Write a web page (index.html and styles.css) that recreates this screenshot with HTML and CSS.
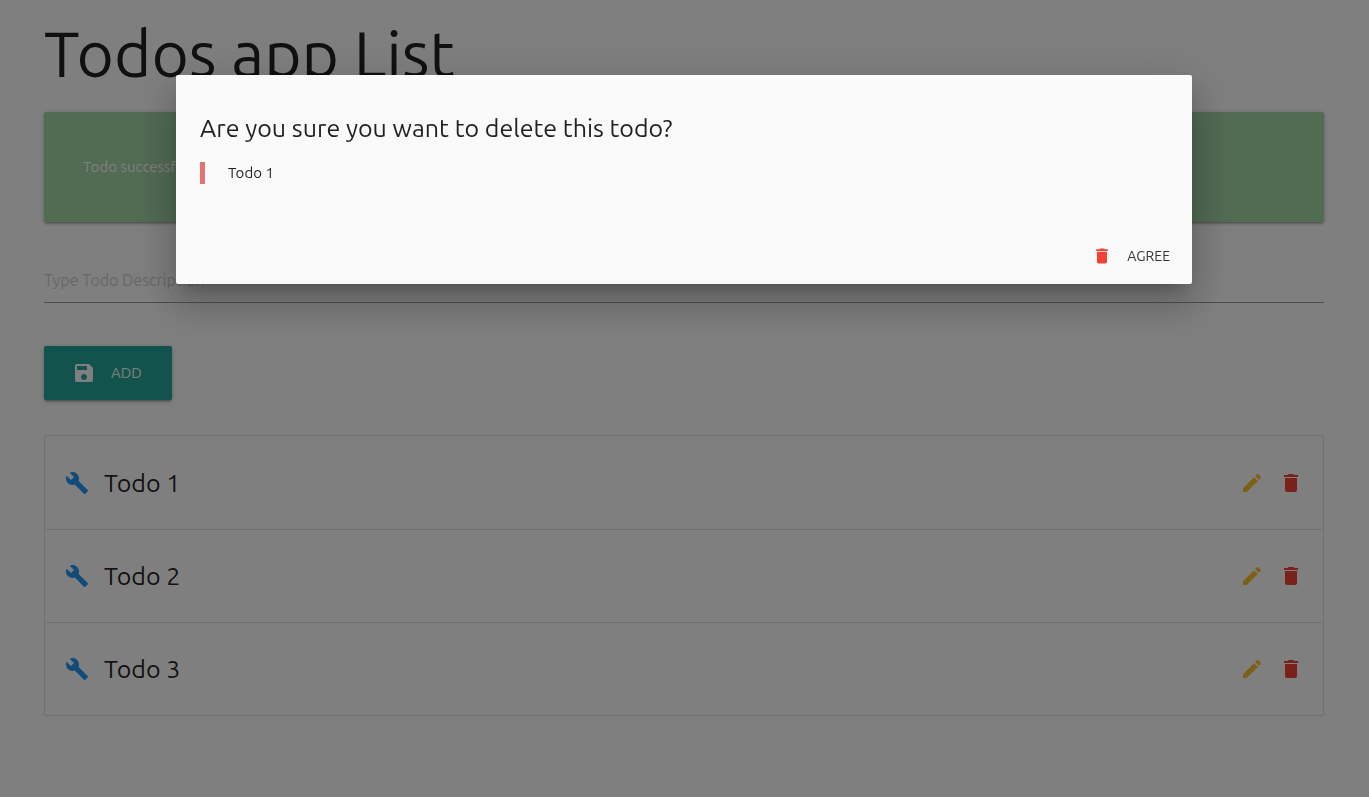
FILE: index.html
```html
<!DOCTYPE html>
<html lang="en">
<head>
<meta charset="utf-8">
<meta name="viewport" content="width=device-width, initial-scale=1">
<title>Todos app List</title>
<link rel="stylesheet" href="styles.css">
</head>
<body>
<svg class="sprite" aria-hidden="true">
  <symbol id="save" viewBox="0 0 24 24"><path d="M17 3H5c-1.110 0-2 .9-2 2v14c0 1.100.89 2 2 2h14c1.100 0 2-.9 2-2V7l-4-4zm-5 16c-1.660 0-3-1.340-3-3s1.340-3 3-3 3 1.340 3 3-1.340 3-3 3zm3-10H5V5h10v4z"/></symbol>
  <symbol id="build" viewBox="0 0 24 24"><path d="M22.700 19l-9.100-9.100c.9-2.300.4-5-1.500-6.900-2-2-5-2.400-7.400-1.300L9 6 6 9 1.600 4.700C.4 7.100.9 10.100 2.900 12.100c1.900 1.900 4.600 2.400 6.900 1.500l9.100 9.100c.4.4 1 .4 1.400 0l2.300-2.300c.5-.4.5-1.100.1-1.400z"/></symbol>
  <symbol id="edit" viewBox="0 0 24 24"><path d="M3 17.250V21h3.750L17.810 9.940l-3.750-3.750L3 17.250zM20.710 7.040c.39-.39.39-1.020 0-1.410l-2.340-2.340c-.39-.39-1.020-.39-1.410 0l-1.830 1.830 3.750 3.750 1.830-1.830z"/></symbol>
  <symbol id="delete" viewBox="0 0 24 24"><path d="M6 19c0 1.100.9 2 2 2h8c1.100 0 2-.9 2-2V7H6v12zM19 4h-3.500l-1-1h-5l-1 1H5v2h14V4z"/></symbol>
</svg>
<main class="container">
  <h1 class="page-title">Todos app List</h1>
  <div class="card-panel">Todo successfully added!</div>
  <form class="todo-form">
    <input class="todo-input" type="text" aria-label="Todo description" placeholder="Type Todo Description">
    <button class="btn-add" type="button"><svg class="icon"><use href="#save"/></svg>ADD</button>
  </form>
  <ul class="collection">
    <li class="item"><svg class="icon blue"><use href="#build"/></svg><span class="item-title">Todo 1</span>
      <button class="icon-btn amber" type="button" aria-label="Edit Todo 1"><svg class="icon"><use href="#edit"/></svg></button>
      <button class="icon-btn red" type="button" aria-label="Delete Todo 1"><svg class="icon"><use href="#delete"/></svg></button></li>
    <li class="item"><svg class="icon blue"><use href="#build"/></svg><span class="item-title">Todo 2</span>
      <button class="icon-btn amber" type="button" aria-label="Edit Todo 2"><svg class="icon"><use href="#edit"/></svg></button>
      <button class="icon-btn red" type="button" aria-label="Delete Todo 2"><svg class="icon"><use href="#delete"/></svg></button></li>
    <li class="item"><svg class="icon blue"><use href="#build"/></svg><span class="item-title">Todo 3</span>
      <button class="icon-btn amber" type="button" aria-label="Edit Todo 3"><svg class="icon"><use href="#edit"/></svg></button>
      <button class="icon-btn red" type="button" aria-label="Delete Todo 3"><svg class="icon"><use href="#delete"/></svg></button></li>
  </ul>
</main>
<div class="overlay">
  <section class="modal" role="dialog" aria-modal="true" aria-labelledby="modal-title">
    <div class="modal-content">
      <h2 class="modal-title" id="modal-title">Are you sure you want to delete this todo?</h2>
      <blockquote class="quote">Todo 1</blockquote>
    </div>
    <footer class="modal-footer">
      <button class="btn-agree" type="button"><svg class="icon-small red"><use href="#delete"/></svg>AGREE</button>
    </footer>
  </section>
</div>
</body>
</html>
```
FILE: styles.css
```css
* { box-sizing: border-box; }
body {
  margin: 0;
  padding-right: 1px;
  background: #fff;
  color: rgba(0, 0, 0, .87);
  font: 15px/22px Ubuntu, "Noto Sans", sans-serif;
}
button, input { font: inherit; }
button { border: 0; background: none; padding: 0; cursor: pointer; }
.sprite { position: absolute; width: 0; height: 0; }
.icon { width: 24px; height: 24px; fill: currentColor; flex: none; }
.icon-small { width: 20px; height: 20px; fill: currentColor; flex: none; }
.blue { color: #2196f3; }
.amber { color: #fbc02d; }
.red { color: #f44336; }

.container { width: 94%; max-width: 1280px; margin: 0 auto; }
.page-title {
  margin: 0;
  padding: 18px 0 24px;
  font-size: 64px;
  line-height: 70px;
  font-weight: 400;
  color: #212121;
}
.card-panel {
  padding: 44px 39px;
  border-radius: 2px;
  background: #a5d6a7;
  color: #fff;
  box-shadow: 0 2px 2px rgba(0, 0, 0, .14), 0 3px 1px -2px rgba(0, 0, 0, .12), 0 1px 5px rgba(0, 0, 0, .2);
}
.todo-form { padding-top: 36px; }
.todo-input {
  display: block;
  width: 100%;
  height: 45px;
  padding: 0;
  border: 0;
  border-bottom: 1px solid #9e9e9e;
  background: none;
  font-size: 16px;
  outline: 0;
}
.todo-input::placeholder { color: #d1d1d1; opacity: 1; }
.btn-add {
  display: flex;
  align-items: center;
  gap: 15px;
  height: 54px;
  margin: 43px 0 35px;
  padding: 0 30px 0 28px;
  border-radius: 2px;
  background: #26a69a;
  color: #fff;
  box-shadow: 0 2px 2px rgba(0, 0, 0, .14), 0 3px 1px -2px rgba(0, 0, 0, .12), 0 1px 5px rgba(0, 0, 0, .2);
}
.collection {
  margin: 0;
  padding: 0;
  list-style: none;
  border: 1px solid #e0e0e0;
  border-radius: 2px;
}
.item { display: flex; align-items: center; height: 93px; padding: 0 20px; }
.item + .item { border-top: 1px solid #e0e0e0; }
.item-title { flex: 1; margin-left: 15px; font-size: 25px; line-height: 32px; }
.icon-btn { display: flex; margin-left: 15px; }

.overlay {
  position: fixed;
  inset: 0;
  padding: 75px 1px 0 0;
  background: rgba(0, 0, 0, .5);
}
.modal {
  width: 75%;
  max-width: 1016px;
  margin: 0 auto;
  border-radius: 2px;
  background: #fafafa;
  box-shadow: 0 24px 38px 3px rgba(0, 0, 0, .14), 0 9px 46px 8px rgba(0, 0, 0, .12), 0 11px 15px -7px rgba(0, 0, 0, .2);
}
.modal-content { padding: 37px 24px 44px; }
.modal-title { margin: 0 0 18px; font-size: 25px; line-height: 32px; font-weight: 400; }
.quote { margin: 0; padding-left: 23px; border-left: 5px solid #e57373; }
.modal-footer { display: flex; justify-content: flex-end; padding: 10px 22px; }
.btn-agree {
  display: flex;
  align-items: center;
  gap: 15px;
  height: 36px;
  color: #343434;
  font-size: 14px;
}
```
